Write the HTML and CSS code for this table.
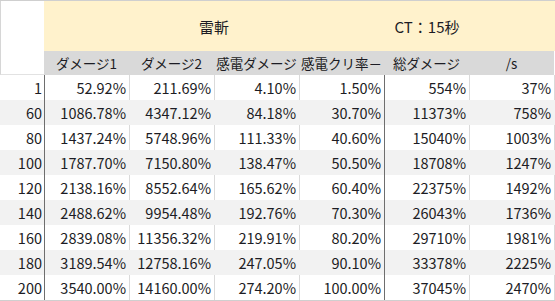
FILE: index.html
```html
<!DOCTYPE html>
<html lang="ja">
<head>
<meta charset="utf-8">
<link rel="stylesheet" href="styles.css">
</head>
<body>
<div class="sheet">
  <div class="row title-row">
    <div class="cell blank"></div>
    <div class="cell gold"></div>
    <div class="cell gold title">雷斬</div>
    <div class="cell gold title">CT：15秒</div>
  </div>
  <div class="row head-row">
    <div class="cell blank"></div>
    <div class="cell head">ダメージ1</div>
    <div class="cell head">ダメージ2</div>
    <div class="cell head">感電ダメージ</div>
    <div class="cell head">感電クリ率－</div>
    <div class="cell head">総ダメージ</div>
    <div class="cell head">/s</div>
  </div>
  <div class="row data odd"><div class="cell lv">1</div><div class="cell">52.92%</div><div class="cell">211.69%</div><div class="cell">4.10%</div><div class="cell sep">1.50%</div><div class="cell">554%</div><div class="cell">37%</div></div>
  <div class="row data even"><div class="cell lv">60</div><div class="cell">1086.78%</div><div class="cell">4347.12%</div><div class="cell">84.18%</div><div class="cell sep">30.70%</div><div class="cell">11373%</div><div class="cell">758%</div></div>
  <div class="row data odd"><div class="cell lv">80</div><div class="cell">1437.24%</div><div class="cell">5748.96%</div><div class="cell">111.33%</div><div class="cell sep">40.60%</div><div class="cell">15040%</div><div class="cell">1003%</div></div>
  <div class="row data even"><div class="cell lv">100</div><div class="cell">1787.70%</div><div class="cell">7150.80%</div><div class="cell">138.47%</div><div class="cell sep">50.50%</div><div class="cell">18708%</div><div class="cell">1247%</div></div>
  <div class="row data odd"><div class="cell lv">120</div><div class="cell">2138.16%</div><div class="cell">8552.64%</div><div class="cell">165.62%</div><div class="cell sep">60.40%</div><div class="cell">22375%</div><div class="cell">1492%</div></div>
  <div class="row data even"><div class="cell lv">140</div><div class="cell">2488.62%</div><div class="cell">9954.48%</div><div class="cell">192.76%</div><div class="cell sep">70.30%</div><div class="cell">26043%</div><div class="cell">1736%</div></div>
  <div class="row data odd"><div class="cell lv">160</div><div class="cell">2839.08%</div><div class="cell">11356.32%</div><div class="cell">219.91%</div><div class="cell sep">80.20%</div><div class="cell">29710%</div><div class="cell">1981%</div></div>
  <div class="row data even"><div class="cell lv">180</div><div class="cell">3189.54%</div><div class="cell">12758.16%</div><div class="cell">247.05%</div><div class="cell sep">90.10%</div><div class="cell">33378%</div><div class="cell">2225%</div></div>
  <div class="row data odd"><div class="cell lv">200</div><div class="cell">3540.00%</div><div class="cell">14160.00%</div><div class="cell">274.20%</div><div class="cell sep">100.00%</div><div class="cell">37045%</div><div class="cell">2470%</div></div>
</div>
</body>
</html>
```
FILE: styles.css
```css
html, body {
  margin: 0;
  padding: 0;
  background: #ffffff;
}
body {
  font-family: "Noto Sans CJK JP", "Noto Sans", sans-serif;
  color: #1c1c24;
  width: 555px;
  height: 301px;
  overflow: hidden;
}
.sheet {
  width: 555px;
  border-top: 1px solid #cfcfcf;
  border-bottom: 1px solid #cfcfcf;
}
.row {
  display: grid;
  grid-template-columns: 44px repeat(6, 85px);
}
.title-row {
  height: 50px;
  grid-template-columns: 44px 85px 170px 256px;
}
.title-row .cell {
  display: flex;
  align-items: center;
  justify-content: center;
  font-size: 15px;
}
.blank {
  background: #ffffff;
  border-left: 1px solid #d6d6d6;
}
.gold {
  background: #fff2cc;
}
.head-row {
  height: 24px;
}
.head-row .cell {
  display: flex;
  align-items: center;
  justify-content: center;
  font-size: 13.5px;
  white-space: nowrap;
  overflow: hidden;
}
.head-row .head {
  background: #d9d9d9;
}
.head-row .blank {
  border-bottom: 1px solid #e2e2e2;
}
.data {
  height: 25px;
  grid-template-columns: 45px repeat(6, 85px);
}
.data .cell {
  display: flex;
  align-items: center;
  justify-content: flex-end;
  padding-right: 3px;
  font-size: 14.5px;
  border-right: 1px solid transparent;
  white-space: nowrap;
}
.data.even {
  background: #f2f2f2;
}
.data.odd {
  background: #ffffff;
}
.data.odd .cell {
  border-right-color: #dadada;
}
.data .cell.lv {
  border-right: 1px solid #6e6e6e;
  padding-right: 2px;
}
.data .cell.sep {
  border-right: 1px solid #6e6e6e;
}
```
